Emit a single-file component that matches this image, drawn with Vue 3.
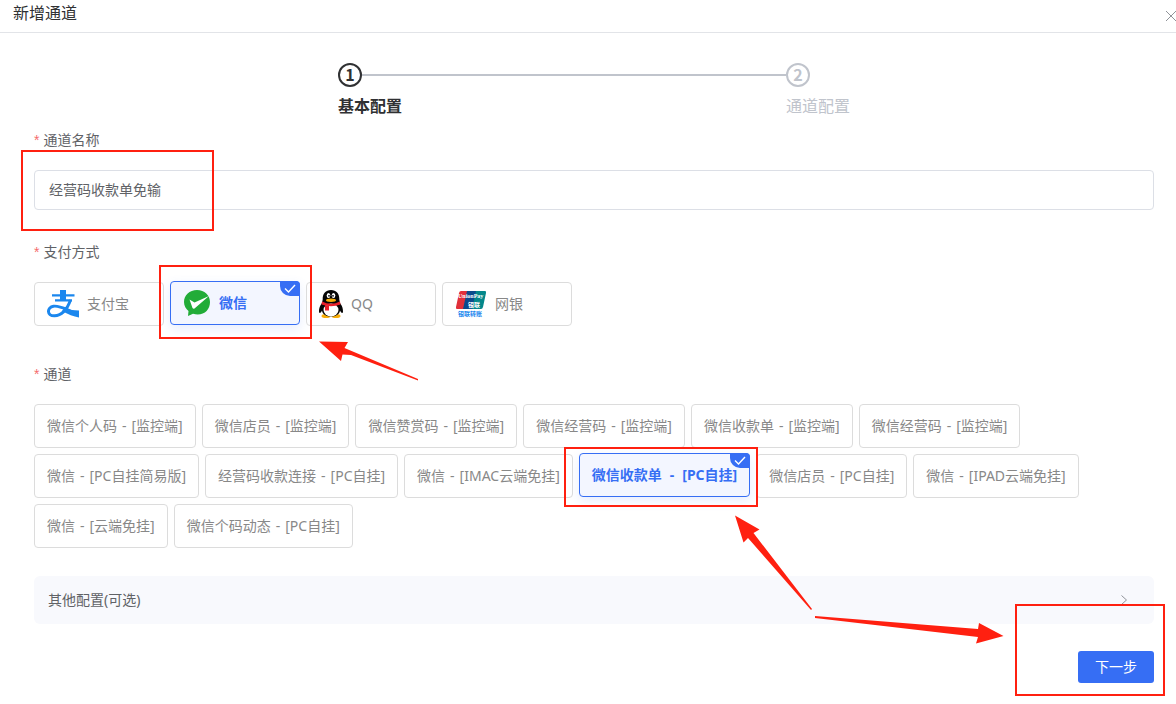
<script setup>
import { ref } from 'vue'

const name = ref('经营码收款单免输')
const pay = ref('wechat')
const channel = ref(9)

const payments = [
  { id: 'alipay', label: '支付宝' },
  { id: 'wechat', label: '微信' },
  { id: 'qq', label: 'QQ' },
  { id: 'union', label: '网银' },
]

const channels = [
  ['微信个人码', '[监控端]'],
  ['微信店员', '[监控端]'],
  ['微信赞赏码', '[监控端]'],
  ['微信经营码', '[监控端]'],
  ['微信收款单', '[监控端]'],
  ['微信经营码', '[监控端]'],
  ['微信', '[PC自挂简易版]'],
  ['经营码收款连接', '[PC自挂]'],
  ['微信', '[IMAC云端免挂]'],
  ['微信收款单', '[PC自挂]'],
  ['微信店员', '[PC自挂]'],
  ['微信', '[IPAD云端免挂]'],
  ['微信', '[云端免挂]'],
  ['微信个码动态', '[PC自挂]'],
]
</script>

<template>
  <div class="dialog">
    <header class="head">
      <h1>新增通道</h1>
      <button class="close" type="button" aria-label="关闭">
        <svg width="10" height="10" viewBox="0 0 10 10"><path d="M0 0L10 10M10 0L0 10" /></svg>
      </button>
    </header>

    <main class="body">
      <ol class="steps">
        <li class="step active">
          <div class="track"><span class="num">1</span><span class="line"></span></div>
          <span class="step-title">基本配置</span>
        </li>
        <li class="step">
          <div class="track"><span class="num">2</span></div>
          <span class="step-title">通道配置</span>
        </li>
      </ol>

      <div class="field">
        <label class="label" for="channel-name">通道名称</label>
        <input id="channel-name" v-model="name" class="text" type="text" />
      </div>

      <fieldset class="field">
        <legend class="label">支付方式</legend>
        <div class="options">
          <label v-for="p in payments" :key="p.id" class="chip pay" :class="{ on: pay === p.id }">
            <input v-model="pay" type="radio" name="pay" :value="p.id" />
            <svg v-if="p.id === 'alipay'" width="32" height="28" viewBox="0 0 32 28">
              <g fill="none" stroke="#1b87ee">
                <path d="M5 5.300H27.500M8 10.300H25" stroke-width="2.2" />
                <path d="M16 0V10" stroke-width="6" />
                <path d="M23.500 10C21 17 16 25.500 7.500 25.800C-.5 26 -.2 17.200 6.500 16.200C14 15.200 21 21 32 24" stroke-width="3" />
              </g>
              <path d="M17 18.500Q24 20.500 32 20.500V27.500Q24 26 15 21Z" fill="#1b87ee" />
            </svg>
            <svg v-else-if="p.id === 'wechat'" width="28" height="28" viewBox="0 0 28 28">
              <path d="M14 1C6.500 1 1 6 1 13C1 17 3 20 5.500 22L5 27L10 24.800C20 27.500 27 21.500 27 13C27 6 21.500 1 14 1Z" fill="#22ac38" />
              <path d="M6.500 10.500L11.500 13.500L26 7L11.500 19.500Q10.300 20 9.500 19Z" fill="#fff" />
            </svg>
            <svg v-else-if="p.id === 'qq'" width="24" height="28" viewBox="0 0 24 28">
              <ellipse cx="7" cy="26" rx="4.500" ry="2" fill="#f9ae08" />
              <ellipse cx="17" cy="26" rx="4.500" ry="2" fill="#f9ae08" />
              <path d="M12 0C6.500 0 3.500 4 3.700 9.500L3 13C0 17 0 20 0 22C.6 24 2 22.500 3 20.500C4 28.500 20 28.500 21 20.500C22 22.500 23.400 24 24 22C24 20 24 17 21 13L20.300 9.500C20.500 4 17.500 0 12 0Z" fill="#050505" />
              <ellipse cx="12" cy="20" rx="7.500" ry="6.500" fill="#fff" />
              <path d="M3 11.500Q12 16 21 11.500L21.500 14.500Q12 18 2.500 14.500Z" fill="#e8202a" />
              <path d="M6 15L10 16V20.500H6Z" fill="#e8202a" />
              <ellipse cx="9.500" cy="5.500" rx="1.800" ry="2.600" fill="#fff" />
              <ellipse cx="14.500" cy="5.500" rx="1.800" ry="2.600" fill="#fff" />
              <circle cx="10" cy="5.800" r=".9" />
              <circle cx="14" cy="5.800" r=".9" />
              <ellipse cx="12" cy="10.200" rx="5" ry="1.700" fill="#f9ae08" />
            </svg>
            <svg v-else width="32" height="28" viewBox="0 0 32 28">
              <path d="M6 1H14L9 19H2Q.5 19 1 17L4 3Q4.500 1 6 1Z" fill="#e1303a" />
              <path d="M12 1H22L18 19H8Z" fill="#0b4a8c" />
              <path d="M21 1H30Q31.500 1 31 3L28 17Q27.500 19 26 19H17Z" fill="#03878a" />
              <text class="union" x="3" y="8">UnionPay</text>
              <text class="union-cn" x="13" y="17">银联</text>
              <text class="union-cn union-sub" x="3" y="26">银联转账</text>
            </svg>
            <span>{{ p.label }}</span>
            <i v-if="pay === p.id" class="tick"><svg width="12" height="9" viewBox="0 0 12 9"><path d="M1 4.500L4.500 8L11 1" /></svg></i>
          </label>
        </div>
      </fieldset>

      <fieldset class="field">
        <legend class="label">通道</legend>
        <div class="options">
          <label v-for="(c, i) in channels" :key="i" class="chip" :class="{ on: channel === i }">
            <input v-model="channel" type="radio" name="channel" :value="i" />
            <span>{{ c[0] }}</span> <span>-</span> <span>{{ c[1] }}</span>
            <i v-if="channel === i" class="tick"><svg width="12" height="9" viewBox="0 0 12 9"><path d="M1 4.500L4.500 8L11 1" /></svg></i>
          </label>
        </div>
      </fieldset>

      <button class="more" type="button" aria-expanded="false">
        <span>其他配置(可选)</span>
        <svg width="6" height="10" viewBox="0 0 6 10"><path d="M.5 .5L5.500 5L.5 9.500" /></svg>
      </button>

      <footer class="foot"><button class="next" type="button">下一步</button></footer>
    </main>

    <svg class="marks" width="1176" height="704" viewBox="0 0 1176 704" aria-hidden="true">
      <g fill="none" stroke="#ff2010" stroke-width="2">
        <rect x="22" y="151" width="191" height="79" />
        <rect x="160" y="266" width="151" height="72" />
        <rect x="565" y="448" width="192" height="58" />
        <rect x="1016" y="605" width="148" height="90" />
      </g>
      <g fill="#ff2010">
        <path d="M319 341.500L348 342L344.500 348L418 379L418 380.500L351 355L342.500 354.500L341 361Z" />
        <path d="M735 515.500L759.500 529.500L753.500 533L812 609L811 610L748 538L743.500 542.500Z" />
        <path d="M815 616L978 629L979 623L1003.500 636L976 643.500L978 637L815 618Z" />
      </g>
    </svg>
  </div>
</template>

<style>
body {
  background: #fff;
}
</style>

<style scoped>
.dialog {
  position: relative;
  overflow: hidden;
  min-height: 100vh;
  font-family: "Noto Sans", "Noto Sans CJK SC", sans-serif;
  font-size: 14px;
  line-height: 20px;
  color: #606266;
}
.dialog *,
.dialog {
  box-sizing: border-box;
}
button,
input {
  font: inherit;
  color: inherit;
}
.head {
  display: flex;
  justify-content: space-between;
  height: 33px;
  padding-left: 13px;
  border-bottom: 1px solid #e2e4e8;
}
h1 {
  margin: 0;
  font-size: 16px;
  line-height: 26px;
  font-weight: 400;
  color: #303133;
}
.close {
  display: flex;
  align-items: center;
  padding: 0;
  border: 0;
  background: none;
}
.close path {
  fill: none;
  stroke: #909399;
}
.body {
  padding: 30px 22px 20px 34px;
}
.steps {
  display: flex;
  max-width: 512px;
  margin: 0 auto;
  padding: 0;
  list-style: none;
  color: #c0c4cc;
}
.step:first-child {
  flex: 1;
}
.track {
  display: flex;
  align-items: center;
}
.num {
  width: 24px;
  height: 24px;
  border: 2px solid #c0c4cc;
  border-radius: 50%;
  text-align: center;
  font-family: "Noto Sans CJK SC", sans-serif;
  font-size: 16px;
  line-height: 18px;
  font-weight: 700;
}
.line {
  flex: 1;
  height: 2px;
  background: #c0c4cc;
}
.step-title {
  display: block;
  font-size: 16px;
  line-height: 38px;
}
.active {
  color: #303133;
}
.active .num {
  border-color: #303133;
}
.active .step-title {
  font-weight: 700;
}
.field {
  margin: 0 0 22px;
  padding: 0;
  border: 0;
  min-width: 0;
}
.steps + .field {
  margin-top: -5px;
}
.label {
  display: block;
  padding: 0 0 10px;
  line-height: 40px;
}
.label::before {
  content: "*";
  margin-right: 4px;
  font-family: "Liberation Sans", sans-serif;
  color: #f56c6c;
}
.text {
  display: block;
  width: 100%;
  height: 40px;
  padding: 0 14px 2px;
  border: 1px solid #dcdfe6;
  border-radius: 4px;
  background: #fff;
}
.options {
  display: flex;
  flex-wrap: wrap;
  gap: 6px;
  padding-bottom: 6px;
}
.chip {
  position: relative;
  display: flex;
  align-items: center;
  gap: 5px;
  height: 44px;
  padding: 0 12px;
  border: 1px solid #dcdcdc;
  border-radius: 4px;
  color: #888;
  white-space: nowrap;
}
.chip input {
  position: absolute;
  opacity: 0;
  margin: 0;
}
.on {
  top: -1px;
  gap: 8px;
  border-color: #366ef4;
  background: #f3f6ff;
  color: #366ef4;
  font-weight: 700;
  box-shadow: 0 4px 12px rgba(54, 110, 244, 0.12);
}
.pay {
  width: 130px;
  gap: 8px;
}
.tick {
  position: absolute;
  top: -1px;
  right: -1px;
  display: flex;
  align-items: center;
  justify-content: center;
  width: 20px;
  height: 15px;
  border-radius: 0 4px 0 10px;
  background: #366ef4;
}
.tick path {
  fill: none;
  stroke: #fff;
  stroke-width: 1.4;
}
.union {
  font: 700 6px/1 "Liberation Serif", serif;
  fill: #fff;
}
.union-cn {
  font: 700 6px/1 "Noto Sans CJK SC", sans-serif;
  fill: #fff;
}
.union-sub {
  fill: #1b87ee;
}
.more {
  display: flex;
  align-items: center;
  justify-content: space-between;
  width: 100%;
  height: 48px;
  padding: 0 27px 0 14px;
  border: 0;
  border-radius: 6px;
  background: #f8f9fd;
}
.more path {
  fill: none;
  stroke: #909399;
}
.foot {
  display: flex;
  justify-content: flex-end;
  padding-top: 27px;
}
.next {
  height: 32px;
  padding: 0 17px;
  border: 0;
  border-radius: 3px;
  background: #366ef4;
  color: #fff;
}
.marks {
  position: absolute;
  top: 0;
  left: 0;
  pointer-events: none;
}
</style>
